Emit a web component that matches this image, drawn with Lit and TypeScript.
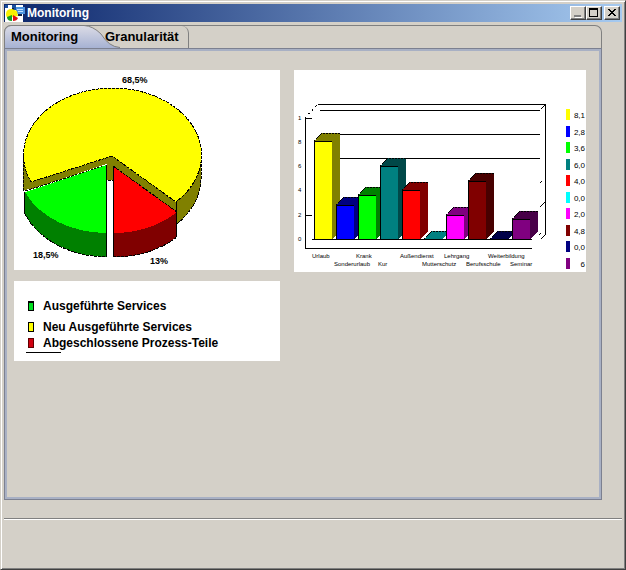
import { LitElement, html, svg, css } from "lit";
import { customElement, state } from "lit/decorators.js";

interface Bar {
  name: string;
  value: string;
  top: number;
  front: string;
  lid: string;
}

const BASE = 239;

const BARS: Bar[] = [
  { name: "Urlaub", value: "8,1", top: 141, front: "#ffff00", lid: "#808000" },
  { name: "Sonderurlaub", value: "2,8", top: 205, front: "#0000ff", lid: "#000080" },
  { name: "Krank", value: "3,6", top: 195, front: "#00ff00", lid: "#008000" },
  { name: "Kur", value: "6,0", top: 166, front: "#008080", lid: "#004848" },
  { name: "Außendienst", value: "4,0", top: 190, front: "#ff0000", lid: "#800000" },
  { name: "Mutterschutz", value: "0,0", top: BASE, front: "#00ffff", lid: "#008080" },
  { name: "Lehrgang", value: "2,0", top: 215, front: "#ff00ff", lid: "#800080" },
  { name: "Berufsschule", value: "4,8", top: 181, front: "#800000", lid: "#480000" },
  { name: "Weiterbildung", value: "0,0", top: BASE, front: "#000080", lid: "#000048" },
  { name: "Seminar", value: "6", top: 219, front: "#800080", lid: "#480048" },
];

const GRID = [110, 134, 158];
const TICKS = [
  { y: 118, label: "1" },
  { y: 142, label: "8" },
  { y: 166, label: "6" },
  { y: 190, label: "4" },
  { y: 215, label: "2" },
  { y: 239, label: "0" },
];

@customElement("pie-chart")
export class PieChart extends LitElement {
  static styles = css`
    :host { display: block; background: #fff; }
    svg { display: block; width: 100%; height: auto; }
    .ink { fill: none; stroke: #000; stroke-width: 1; }
    .fine { fill: none; stroke: #000; stroke-width: 1; stroke-dasharray: 3 1; }
    text { font: bold 9px "Liberation Sans", Arial, sans-serif; fill: #000; }
  `;

  render() {
    return html`
      <svg viewBox="14 70 266 200" role="img" aria-label="Services" shape-rendering="crispEdges">
        <path fill="#808000" d="M23 156 V190 L31 189 L107 164 V180 H113 V170 L176 213 V225 Q201 203 201 180 V156 L176 190 L112 150 L32 175Z" />
        <path fill="#ffff00" d="M112 156 L31 182 A89 67 0 1 1 176 202Z" />
        <path class="fine" d="M112 156 L31 182 A89 67 0 1 1 176 202Z" />
        <path class="ink" d="M176 202 V212" />
        <path class="fine" d="M201 156 V180 Q200 204 177 224 M23 156 V191 M25 191 L107 165" />
        <path fill="#008000" d="M25 192 V214 A89 68 0 0 0 107 257 V233Z" />
        <path fill="#00ff00" d="M107 165 L25 192 A89 68 0 0 0 107 233Z" />
        <path class="ink" d="M106.500 165 V257 M24.500 192 V214" />
        <path class="fine" d="M25 214 A89 68 0 0 0 107 257" />
        <path fill="#800000" d="M113 233 V257 A89 68 0 0 0 177 237 V212Z" />
        <path fill="#ff0000" d="M113 166 V233 A89 68 0 0 0 177 212Z" />
        <path class="fine" d="M113 166 L177 212 M113 257 A89 68 0 0 0 177 237 M108 180 H113" />
        <path class="ink" d="M113.500 166 V257 M176.500 212 V237" />
        <text x="122" y="83">68,5%</text>
        <text x="33" y="258">18,5%</text>
        <text x="150" y="264">13%</text>
      </svg>
    `;
  }
}

@customElement("bar-chart")
export class BarChart extends LitElement {
  static styles = css`
    :host { display: block; background: #fff; }
    svg { display: block; width: 100%; height: auto; }
    .ink { fill: none; stroke: #000; stroke-width: 1; }
    .dots { fill: none; stroke: #000; stroke-width: 1; stroke-dasharray: 2 3; }
    text { font: 6px "Liberation Sans", Arial, sans-serif; fill: #000; }
    .value { font-size: 8px; }
  `;

  private bar(bar: Bar, i: number) {
    const x = 314 + i * 22;
    const t = bar.top;
    return svg`
      <path fill=${bar.lid} d="M${x} ${t} l8 -8 h18 V${BASE - 8} l-8 8 V${t}Z" />
      <path class="ink" d="M${x} ${t} l8 -8 h18" stroke-dasharray="2 1" />
      <rect fill=${bar.front} x=${x} y=${t} width="18" height=${BASE - t} />
      <path class="ink" d="M${x + 0.5} ${BASE} V${t + 0.5} H${x + 18}" />
    `;
  }

  render() {
    return html`
      <svg viewBox="294 70 292 202" role="img" aria-label="Granularität" shape-rendering="crispEdges">
        <path class="ink" d="M318 104.500 H546 M545.500 104 V235 M305.500 118 V248.500 H532 M305 118.500 H312 M305 215.500 H312" />
        <path class="dots" d="M305 118 L318 104" />
        ${GRID.map((y) => svg`<path class="ink" d="M320 ${y + 0.5} H540" />`)}
        <path class="ink" d="M541 109 L546 104 M540 183 L542 181 M540 207 L545 202 M541 233 L539 235 M546 234 L541 239" />
        ${TICKS.map((t) => svg`<text x="298" y=${t.y + 2}>${t.label}</text>`)}
        ${BARS.map((b, i) => this.bar(b, i))}
        <path class="ink" d="M312 239.500 H532" />
        ${BARS.map((b, i) => svg`
          <text x=${312 + i * 22} y=${i % 2 ? 266 : 258}>${b.name}</text>
          <rect fill=${b.front} x="566" y=${109 + Math.round(i * 16.5)} width="4" height="11" />
          <text class="value" x="585" text-anchor="end" y=${118 + Math.round(i * 16.5)}>${b.value}</text>
        `)}
      </svg>
    `;
  }
}

@customElement("app-root")
export class AppRoot extends LitElement {
  @state() private tab = 0;

  static styles = css`
    :host { display: block; font-family: "Liberation Sans", Arial, sans-serif; color: #000; }
    * { box-sizing: border-box; }
    button { font-family: inherit; color: inherit; margin: 0; cursor: default; }
    .window {
      display: flex; flex-direction: column; min-height: 100vh; padding: 2px;
      background: #d4d0c8; border: 1px solid; border-color: #d4d0c8 #404040 #404040 #d4d0c8;
      box-shadow: inset 1px 1px #fff, inset -1px -1px #808080;
    }
    .title {
      display: flex; align-items: center; height: 18px; margin: 1px 1px 0; padding: 0 2px 0 1px; gap: 2px;
      background: linear-gradient(to right, #0a246a, #a6caf0);
    }
    .title h1 { flex: 1; margin: 0; font-size: 12px; line-height: 18px; color: #fff; }
    .logo { display: block; width: 20px; height: 17px; }
    .sys { display: flex; }
    .sys button {
      display: block; width: 16px; height: 14px; padding: 0; background: #d4d0c8;
      border: 1px solid; border-color: #fff #404040 #404040 #fff; box-shadow: inset -1px -1px #808080;
    }
    .sys svg { display: block; width: 14px; height: 12px; }
    .sys .close { margin-left: 2px; }
    .tabs {
      position: relative; display: flex; height: 23px; margin: 3px 21px 0 1px;
      border: 1px solid #808080; border-bottom: 0; border-radius: 7px 7px 0 0;
    }
    .tabs button {
      position: relative; height: 22px; border: 0; background: none; text-align: left;
      font-size: 13px; font-weight: bold; line-height: 22px;
    }
    .tabs .first { width: 97px; padding: 0 0 0 6px; }
    .tabs .second { width: 87px; padding: 0 0 0 3px; border-right: 1px solid #808080; border-top-right-radius: 7px; }
    .shape { position: absolute; left: -1px; top: -1px; width: 116px; height: 23px; }
    .panel {
      flex: 1; margin: 0 21px 0 1px; padding: 21px 15px 21px 9px;
      border: 1px solid #7c8090; box-shadow: inset 0 0 0 2px #a8b0c4;
    }
    .board { display: grid; grid-template-columns: 266fr 292fr; gap: 9px 14px; align-items: start; }
    .keys { padding: 17px 12px 8px; background: #fff; font-size: 12px; font-weight: bold; }
    .keys ul { margin: 0; padding: 0; list-style: none; }
    .keys li { display: flex; align-items: center; gap: 9px; height: 16px; padding-left: 2px; }
    .keys li:first-child { margin-bottom: 5px; }
    .chip { width: 6px; height: 10px; border: 1px solid #000; }
    .green { background: #00e020; border-top-width: 2px; }
    .yellow { background: #ffff00; }
    .red { background: #d00010; border-color: #600000; }
    .rule { width: 35px; height: 1px; margin: 1px 0 0; border: 0; background: #000; }
    .foot { height: 49px; margin: 18px 1px 0; border-top: 1px solid #808080; box-shadow: inset 0 1px #fff; }
  `;

  render() {
    return html`
      <main class="window">
        <header class="title">
          <svg class="logo" viewBox="0 0 20 17" aria-hidden="true">
            <rect width="18" height="17" fill="#fff" />
            <path fill="#1850a0" d="M7 0h4v5H7zM0 0h3v3H0z" />
            <rect x="11" y="2" width="9" height="7" fill="#4c94e0" />
            <path stroke="#c0e0ff" d="M12 4.500h6M13 6.500h5" />
            <path fill="#102040" d="M7 3h2v4H7zM13 9h4v2h-4z" />
            <path fill="#f8f000" d="M1 9q0-5 6-5l5 2 1 5-5 1-4 1q-3 0-3-4z" />
            <path fill="#10a020" d="M2 12l5-2v6q-5 0-5-4z" />
            <path fill="#e01010" d="M8 10l5 3q-1 3-5 3z" />
          </svg>
          <h1>Monitoring</h1>
          <div class="sys">
            <button aria-label="Minimieren"><svg viewBox="0 0 14 12"><path fill="#808080" d="M3 8h7v2H3z" /><path fill="#fff" d="M4 10h7v1H4z" /></svg></button>
            <button aria-label="Maximieren"><svg viewBox="0 0 14 12" shape-rendering="crispEdges"><path fill="#000" fill-rule="evenodd" d="M2 1h9v9H2zM3 3h7v6H3z" /></svg></button>
            <button class="close" aria-label="Schließen"><svg viewBox="0 0 14 12" shape-rendering="crispEdges"><path fill="#000" d="M3 2h2v1h1v1h2V3h1V2h2v1h-1v1H9v1H8v1h1v1h1v1h1v1H9V8H8V7H6v1H5v1H3V8h1V7h1V6h1V5H5V4H4V3H3z" /></svg></button>
          </div>
        </header>
        <nav class="tabs" role="tablist">
          <svg class="shape" viewBox="0 0 116 23" aria-hidden="true">
            <defs>
              <linearGradient id="glow" x1="0" y1="0" x2="0" y2="1">
                <stop offset="0" stop-color="#dcdce6" />
                <stop offset="1" stop-color="#a4b0d2" />
              </linearGradient>
            </defs>
            <path fill="url(#glow)" stroke="#808080" d="M.5 24V7Q1 1.500 7 .5H80Q89 1 97 9Q105 22 116 22.500V24Z" />
          </svg>
          <button class="first" role="tab" aria-selected=${this.tab === 0} @click=${() => (this.tab = 0)}>Monitoring</button>
          <button class="second" role="tab" aria-selected=${this.tab === 1} @click=${() => (this.tab = 1)}>Granularität</button>
        </nav>
        <section class="panel" role="tabpanel">
          <div class="board">
            <pie-chart></pie-chart>
            <bar-chart></bar-chart>
            <div class="keys">
              <ul>
                <li><span class="chip green"></span>Ausgeführte Services</li>
                <li><span class="chip yellow"></span>Neu Ausgeführte Services</li>
                <li><span class="chip red"></span>Abgeschlossene Prozess-Teile</li>
              </ul>
              <hr class="rule" />
            </div>
          </div>
        </section>
        <footer class="foot"></footer>
      </main>
    `;
  }
}
